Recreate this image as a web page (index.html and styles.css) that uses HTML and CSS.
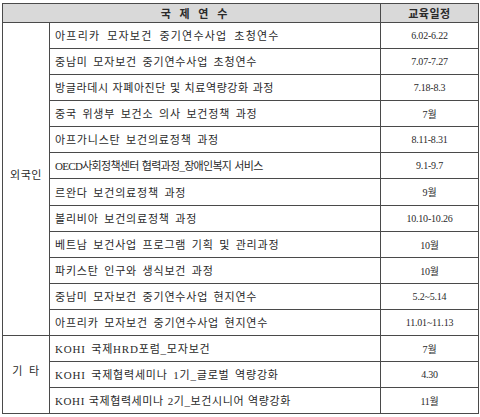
FILE: index.html
```html
<!DOCTYPE html>
<html lang="ko">
<head>
<meta charset="utf-8">
<link rel="stylesheet" href="styles.css">
</head>
<body>
<div class="table">
  <div class="cell head span2 title">국 제 연 수</div>
  <div class="cell head date-head">교육일정</div>

  <div class="cell group g1">외국인</div>
  <div class="cell name wide">아프리카 모자보건 중기연수사업 초청연수</div>
  <div class="cell date">6.02-6.22</div>
  <div class="cell name">중남미 모자보건 중기연수사업 초청연수</div>
  <div class="cell date">7.07-7.27</div>
  <div class="cell name tight">방글라데시 자폐아진단 및 치료역량강화 과정</div>
  <div class="cell date">7.18-8.3</div>
  <div class="cell name">중국 위생부 보건소 의사 보건정책 과정</div>
  <div class="cell date">7월</div>
  <div class="cell name">아프가니스탄 보건의료정책 과정</div>
  <div class="cell date">8.11-8.31</div>
  <div class="cell name condensed">OECD사회정책센터 협력과정_장애인복지 서비스</div>
  <div class="cell date">9.1-9.7</div>
  <div class="cell name">르완다 보건의료정책 과정</div>
  <div class="cell date">9월</div>
  <div class="cell name">볼리비아 보건의료정책 과정</div>
  <div class="cell date">10.10-10.26</div>
  <div class="cell name">베트남 보건사업 프로그램 기획 및 관리과정</div>
  <div class="cell date">10월</div>
  <div class="cell name">파키스탄 인구와 생식보건 과정</div>
  <div class="cell date">10월</div>
  <div class="cell name">중남미 모자보건 중기연수사업 현지연수</div>
  <div class="cell date">5.2~5.14</div>
  <div class="cell name">아프리카 모자보건 중기연수사업 현지연수</div>
  <div class="cell date">11.01~11.13</div>

  <div class="cell group g2">기 타</div>
  <div class="cell name">KOHI 국제HRD포럼_모자보건</div>
  <div class="cell date">7월</div>
  <div class="cell name">KOHI 국제협력세미나 1기_글로벌 역량강화</div>
  <div class="cell date">4.30</div>
  <div class="cell name tight">KOHI 국제협력세미나 2기_보건시니어 역량강화</div>
  <div class="cell date">11월</div>
</div>
</body>
</html>
```

FILE: styles.css
```css
html, body {
  margin: 0;
  padding: 0;
  background: #ffffff;
}

body {
  padding: 3px 0 0 2px;
  font-family: "Liberation Serif", "Noto Sans CJK KR", serif;
  color: #2a2a2a;
}

.table {
  display: grid;
  width: 475px;
  grid-template-columns: 46px 330px 97px;
  grid-template-rows: 18px repeat(6, 25px) 26px repeat(8, 25px);
  gap: 1px;
  border: 1px solid #4a4a4a;
  background: #4a4a4a;
}

.cell {
  background: #ffffff;
  display: flex;
  align-items: center;
  font-size: 11px;
  letter-spacing: 0.8px;
  white-space: pre;
  overflow: hidden;
  padding-bottom: 1px;
  box-sizing: border-box;
}

.head {
  background: #d9d9d9;
  font-weight: bold;
  justify-content: center;
}

.span2 {
  grid-column: 1 / 3;
}

.title {
  letter-spacing: 3px;
  padding-left: 8px;
}

.date-head {
  letter-spacing: 0.5px;
}

.group {
  grid-column: 1;
  justify-content: center;
  letter-spacing: 0.5px;
}

.g1 {
  grid-row: 2 / 14;
  padding-bottom: 10px;
}

.g2 {
  grid-row: 14 / 17;
  padding-bottom: 10px;
  word-spacing: 3px;
}

.name {
  padding-left: 5px;
  word-spacing: 2px;
}

.wide {
  letter-spacing: 1.2px;
  word-spacing: 3px;
}

.tight {
  letter-spacing: 0.6px;
  word-spacing: 0.5px;
}

.condensed {
  letter-spacing: -0.7px;
  word-spacing: 1px;
}

.date {
  justify-content: center;
  font-size: 10px;
  letter-spacing: -0.2px;
  word-spacing: 0;
}
```
